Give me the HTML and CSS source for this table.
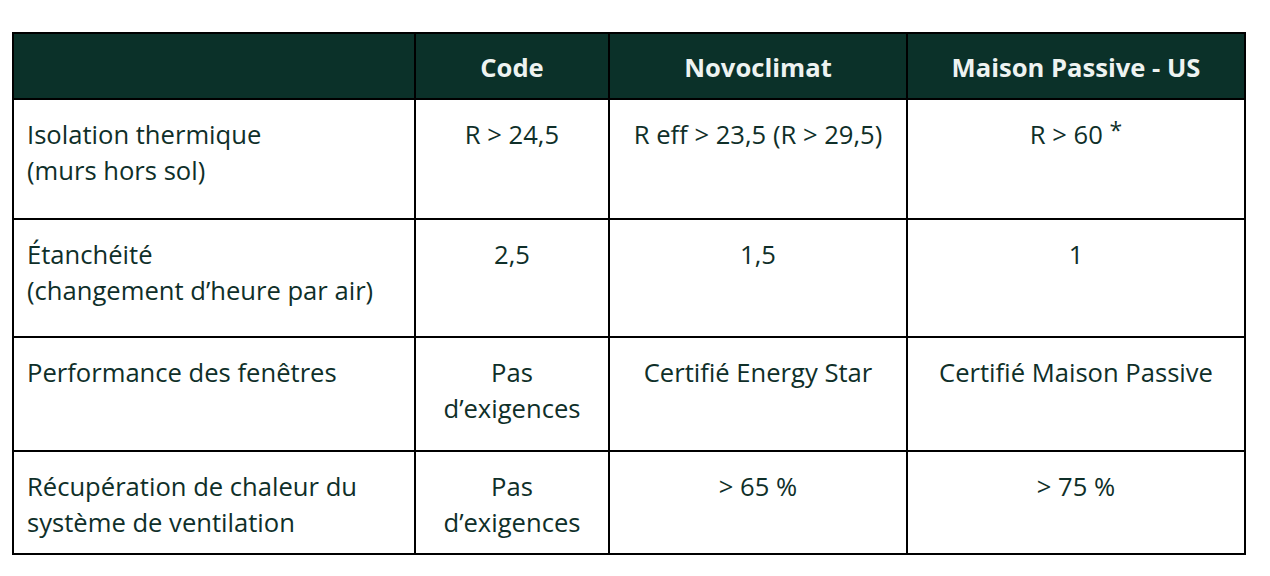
FILE: index.html
```html
<!DOCTYPE html>
<html lang="fr">
<head>
<meta charset="utf-8">
<link rel="stylesheet" href="styles.css">
</head>
<body>
<table class="compare">
  <colgroup>
    <col class="c1"><col class="c2"><col class="c3"><col class="c4">
  </colgroup>
  <thead>
    <tr class="head">
      <th></th>
      <th>Code</th>
      <th>Novoclimat</th>
      <th>Maison Passive - US</th>
    </tr>
  </thead>
  <tbody>
    <tr class="r1">
      <td class="label">Isolation thermique<br>(murs hors sol)</td>
      <td>R &gt; 24,5</td>
      <td>R eff &gt; 23,5 (R &gt; 29,5)</td>
      <td>R &gt; 60 <span class="star">*</span></td>
    </tr>
    <tr class="r2">
      <td class="label">Étanchéité<br>(changement d’heure par air)</td>
      <td>2,5</td>
      <td>1,5</td>
      <td>1</td>
    </tr>
    <tr class="r3">
      <td class="label">Performance des fenêtres</td>
      <td>Pas<br>d’exigences</td>
      <td>Certifié Energy Star</td>
      <td>Certifié Maison Passive</td>
    </tr>
    <tr class="r4">
      <td class="label">Récupération de chaleur du<br>système de ventilation</td>
      <td>Pas<br>d’exigences</td>
      <td>&gt; 65 %</td>
      <td>&gt; 75 %</td>
    </tr>
  </tbody>
</table>
</body>
</html>
```

FILE: styles.css
```css
html, body {
  margin: 0;
  padding: 0;
  background: #ffffff;
}

body {
  font-family: "Open Sans", Lato, sans-serif;
  color: #0f2f29;
}

.compare {
  margin: 32px 0 0 12px;
  border-collapse: collapse;
  table-layout: fixed;
  width: 1234px;
  font-size: 25.6px;
  line-height: 36px;
}

.c1 { width: 402px; }
.c2 { width: 194px; }
.c3 { width: 298px; }
.c4 { width: 338px; }

.compare th,
.compare td {
  border: 2px solid #000;
  vertical-align: top;
  text-align: center;
  padding: 17px 6px 12px;
}

.compare th {
  background: #0b3129;
  color: #eef3f1;
  font-weight: 700;
  vertical-align: middle;
  padding: 4px 6px 0;
}

.compare td.label {
  text-align: left;
  padding-left: 13px;
}

.head { height: 66px; }
.r1 { height: 120px; }
.r2 { height: 118px; }
.r3 { height: 114px; }
.r4 { height: 102px; }

.star {
  display: inline-block;
  font-size: 23px;
  line-height: 0;
  vertical-align: 5px;
}
```
